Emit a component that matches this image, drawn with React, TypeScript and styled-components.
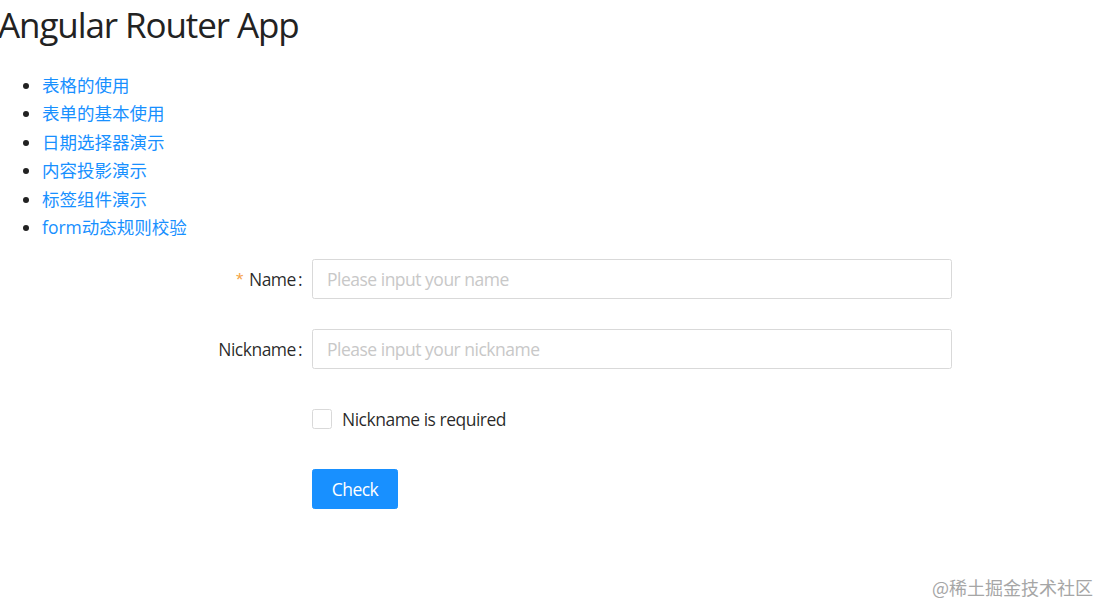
import React from 'react'
import styled, { createGlobalStyle } from 'styled-components';

const GlobalStyle = createGlobalStyle`
    html, body {
        margin: 0;
        padding: 0;
        background: #fff;
    }
    body {
        font-family: "Open Sans", "Noto Sans CJK SC", sans-serif;
        color: rgba(0, 0, 0, 0.85);
        font-size: 17.5px;
    }
`;

const links = [
    "表格的使用",
    "表单的基本使用",
    "日期选择器演示",
    "内容投影演示",
    "标签组件演示",
    "form动态规则校验",
];

export default function App() {
    return (
        <Page>
            <GlobalStyle />
            <Title>Angular Router App</Title>
            <NavList>
                {links.map(l => (
                    <li key={l}><a href="#">{l}</a></li>
                ))}
            </NavList>

            <Form>
                <FormRow>
                    <Label required>Name</Label>
                    <Input placeholder="Please input your name" />
                </FormRow>
                <FormRow>
                    <Label>Nickname</Label>
                    <Input placeholder="Please input your nickname" />
                </FormRow>
                <FormRow>
                    <span />
                    <CheckLabel>
                        <CheckBox />
                        Nickname is required
                    </CheckLabel>
                </FormRow>
                <FormRow>
                    <span />
                    <div><Button>Check</Button></div>
                </FormRow>
            </Form>

            <Watermark>@稀土掘金技术社区</Watermark>
        </Page>
    )
}

const Page = styled.div`
    position: relative;
    min-height: 610px;
`;

const Title = styled.h1`
    margin: 4px 0 0 -2px;
    font-size: 35px;
    font-weight: 400;
    line-height: 42px;
    letter-spacing: -1.1px;
    color: #222;
`;

const NavList = styled.ul`
    margin: 25px 0 0 0;
    padding-left: 42px;
    list-style: disc;
    color: #222;

    li {
        line-height: 28.4px;
        font-size: 17.5px;
    }

    a {
        color: #1890ff;
        text-decoration: none;
    }
`;

const Form = styled.form`
    margin-top: 18px;
    display: flex;
    flex-direction: column;
    gap: 30px;
    letter-spacing: -0.5px;
`;

const FormRow = styled.div`
    display: grid;
    grid-template-columns: 312px 640px;
    align-items: center;
    height: 40px;
`;

const Label = styled.label<{ required?: boolean }>`
    text-align: right;
    padding-right: 10px;
    font-size: 17.5px;
    color: rgba(0, 0, 0, 0.85);
    white-space: nowrap;

    &::before {
        content: ${p => (p.required ? '"*"' : 'none')};
        color: #f5a54a;
        margin-right: 6px;
        font-size: 19px;
        font-family: "Liberation Sans", sans-serif;
    }

    &::after {
        content: ":";
        margin-left: 2px;
    }
`;

const Input = styled.input`
    box-sizing: border-box;
    width: 640px;
    height: 40px;
    padding: 0 14px;
    border: 1px solid #d9d9d9;
    border-radius: 2.5px;
    font-family: inherit;
    font-size: 17.5px;
    letter-spacing: -0.5px;
    color: rgba(0, 0, 0, 0.85);
    outline: none;

    &::placeholder {
        color: #c8c8c8;
    }
`;

const CheckLabel = styled.label`
    display: flex;
    align-items: center;
    gap: 10px;
    font-size: 17.5px;
    color: rgba(0, 0, 0, 0.85);
`;

const CheckBox = styled.span`
    box-sizing: border-box;
    width: 20px;
    height: 20px;
    border: 1px solid #d9d9d9;
    border-radius: 2.5px;
    background: #fff;
`;

const Button = styled.button`
    box-sizing: border-box;
    width: 86px;
    height: 40px;
    border: 1px solid #1890ff;
    border-radius: 2.5px;
    background: #1890ff;
    color: #fff;
    font-family: inherit;
    font-size: 17.5px;
    letter-spacing: -0.5px;
    cursor: pointer;
`;

const Watermark = styled.div`
    position: absolute;
    right: 19px;
    top: 570px;
    font-size: 18px;
    color: #a6a6a6;
    font-family: "Noto Sans CJK SC", sans-serif;
`;
